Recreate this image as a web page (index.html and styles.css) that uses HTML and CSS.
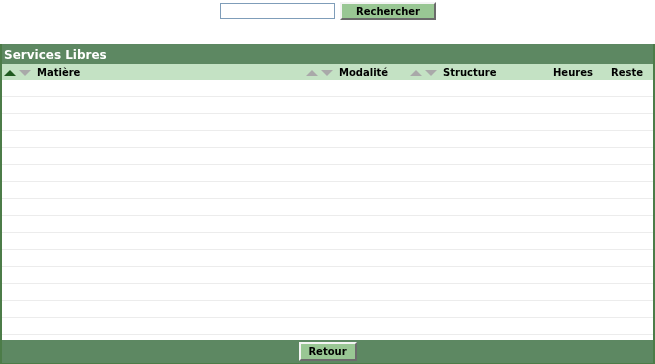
FILE: index.html
```html
<!DOCTYPE html>
<html lang="fr">
<head>
  <meta charset="UTF-8" />
  <title>Services Libres</title>
  <link rel="stylesheet" href="styles.css">
</head>
<body>
  <form class="search">
    <input type="text" class="search-input" autofocus>
    <button type="button" class="btn btn-search">Rechercher</button>
  </form>

  <div class="panel">
    <div class="panel-title">Services Libres</div>
    <table class="grid">
      <thead>
        <tr>
          <th class="col-matiere"><span class="sort"><i class="up on"></i><i class="down"></i></span>Matière</th>
          <th class="col-modalite"><span class="sort"><i class="up"></i><i class="down"></i></span>Modalité</th>
          <th class="col-structure"><span class="sort"><i class="up"></i><i class="down"></i></span>Structure</th>
          <th class="col-heures">Heures</th>
          <th class="col-reste">Reste</th>
        </tr>
      </thead>
      <tbody id="rows"></tbody>
    </table>
    <div class="panel-footer">
      <button type="button" class="btn btn-back">Retour</button>
    </div>
  </div>

  <script>
    // lignes vides du tableau
    var tbody = document.getElementById('rows');
    for (var i = 0; i < 15; i++) {
      var tr = document.createElement('tr');
      tr.innerHTML = '<td></td><td></td><td></td><td></td><td></td>';
      tbody.appendChild(tr);
    }
  </script>
</body>
</html>
```

FILE: styles.css
```css
body { margin: 0; font-family: "DejaVu Sans", Verdana, sans-serif; font-size: 11px; background: #fff; }

.search { display: flex; justify-content: center; align-items: center; gap: 5px; padding: 1px 0 0 0; margin: 0 0 24px 0; }
.search-input { width: 109px; height: 12px; padding: 1px 2px; border: 1px solid #7f9db9; font: inherit; outline: none; margin-left: 1px; }
.btn { font-family: "DejaVu Sans", Verdana, sans-serif; font-size: 10px; font-weight: bold; color: #000; background: #99c794; border: 2px solid; border-color: #f4f4f4 #6b6b6b #6b6b6b #f4f4f4; padding: 0; cursor: pointer; }
.btn-search { width: 96px; height: 18px; margin-top: 1px; }
.btn-back { width: 58px; height: 19px; }

.panel { border: 1px solid #4c7c48; border-width: 0 2px 1px 2px; }
.panel-title { background: #5d8862; color: #fff; font-size: 12px; font-weight: bold; height: 20px; line-height: 23px; padding-left: 2px; }

.grid { width: 100%; border-collapse: collapse; table-layout: fixed; }
.grid th { box-sizing: border-box; background: #c4e2c4; height: 16px; padding: 0; text-align: left; font-size: 10px; font-weight: bold; white-space: nowrap; }
.grid td { height: 16px; padding: 0; border-bottom: 1px solid #ececec; }
.col-matiere { width: 302px; }
.col-modalite { width: 104px; }
.col-structure { width: 110px; }
.col-heures { width: 90px; padding-left: 35px !important; }
.col-reste { padding-left: 3px !important; }

.sort { display: inline-flex; gap: 3px; margin: 0 6px 0 2px; vertical-align: 0; }
.sort i { width: 0; height: 0; border-left: 6px solid transparent; border-right: 6px solid transparent; }
.sort .up { border-bottom: 6px solid #a9a9a9; }
.sort .down { border-top: 6px solid #a9a9a9; }
.sort .up.on { border-bottom-color: #1f5a1f; }

.panel-footer { background: #5d8862; margin-top: 5px; height: 23px; display: flex; justify-content: center; align-items: center; }
```
